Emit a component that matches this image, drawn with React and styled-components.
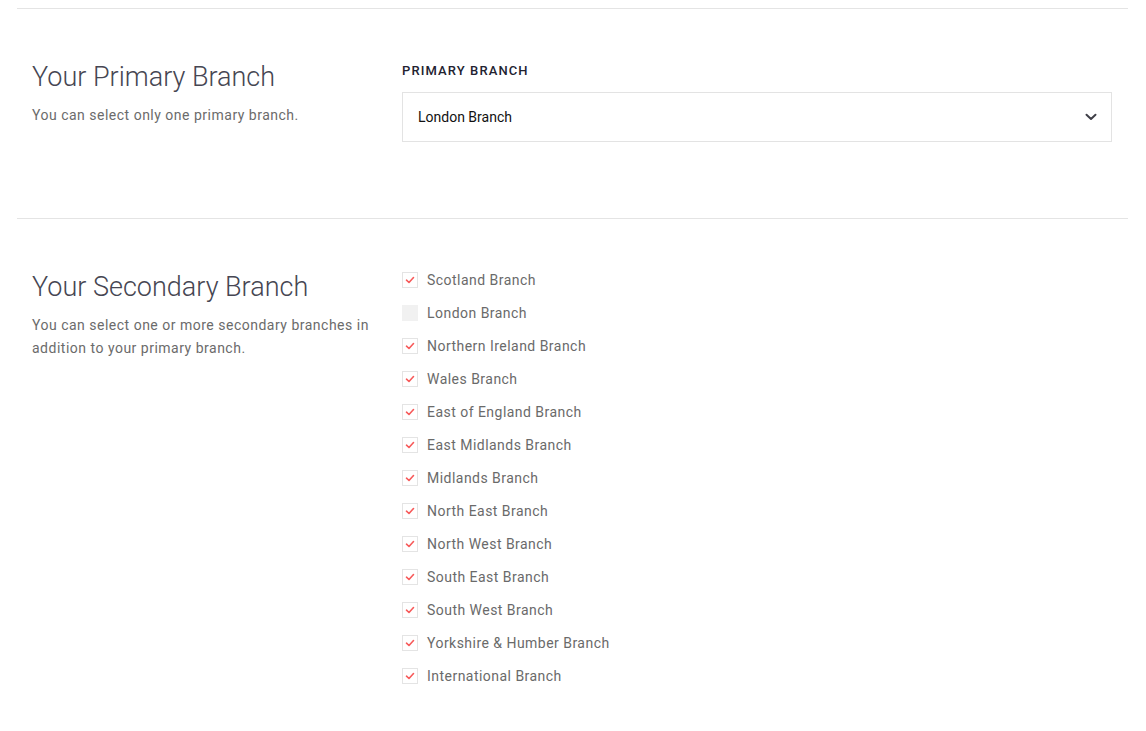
import React from 'react';
import styled, { createGlobalStyle } from 'styled-components';

const GlobalStyle = createGlobalStyle`
  body {
    margin: 0;
    background: #fff;
    font-family: Roboto, 'Noto Sans', sans-serif;
  }
`;

const Page = styled.div`
  padding: 8px 18px 0 17px;
`;

const Section = styled.section`
  display: grid;
  grid-template-columns: 370px 1fr;
  border-top: 1px solid #e4e4e4;
  padding: ${({ $pad }) => $pad};
  padding-left: 15px;
  padding-right: 16px;
`;

const Intro = styled.div`
  padding-right: 24px;
  margin-top: ${({ $shift }) => $shift}px;
`;

const Title = styled.h2`
  margin: 0 0 11px;
  font-size: 27px;
  font-weight: 300;
  line-height: 32px;
  color: #464652;
`;

const Hint = styled.p`
  margin: 0;
  font-size: 14px;
  line-height: 23px;
  letter-spacing: 0.5px;
  color: #6b6b6b;
`;

const Label = styled.div`
  font-size: 13px;
  font-weight: 500;
  letter-spacing: 1.1px;
  line-height: 16px;
  color: #222230;
  margin-bottom: 13px;
`;

const Select = styled.div`
  display: flex;
  align-items: center;
  justify-content: space-between;
  height: 48px;
  border: 1px solid #e3e3e3;
  padding: 0 14px 0 15px;
  font-size: 14px;
  color: #111;
`;

const List = styled.ul`
  list-style: none;
  margin: 0;
  padding: 0;
  display: flex;
  flex-direction: column;
  gap: 17px;
`;

const Item = styled.li`
  display: flex;
  align-items: center;
  gap: 9px;
  height: 16px;
  font-size: 14px;
  letter-spacing: 0.47px;
  color: #6a6a6a;
`;

const Box = styled.span`
  width: 16px;
  height: 16px;
  box-sizing: border-box;
  display: flex;
  align-items: center;
  justify-content: center;
  border: 1px solid ${({ $on }) => ($on ? '#e4e4e4' : '#f1f1f1')};
  background: ${({ $on }) => ($on ? '#fff' : '#f1f1f1')};
`;

const branches = [
  ['Scotland Branch', true],
  ['London Branch', false],
  ['Northern Ireland Branch', true],
  ['Wales Branch', true],
  ['East of England Branch', true],
  ['East Midlands Branch', true],
  ['Midlands Branch', true],
  ['North East Branch', true],
  ['North West Branch', true],
  ['South East Branch', true],
  ['South West Branch', true],
  ['Yorkshire & Humber Branch', true],
  ['International Branch', true],
];

const Check = () => (
  <svg width="10" height="8" viewBox="0 0 10 8">
    <path d="M1.5 4.2 L4 6.5 L8.5 1.5" fill="none" stroke="#f75a5a" strokeWidth="1.6" strokeLinecap="round" strokeLinejoin="round" />
  </svg>
);

const Chevron = () => (
  <svg width="12" height="8" viewBox="0 0 12 8">
    <path d="M1.5 1.8 L6 6 L10.5 1.8" fill="none" stroke="#3f3f48" strokeWidth="2" strokeLinecap="round" strokeLinejoin="round" />
  </svg>
);

const App = () => (
  <Page>
    <GlobalStyle />
    <Section $pad="54px 0 76px">
      <Intro $shift={-2}>
        <Title>Your Primary Branch</Title>
        <Hint>You can select only one primary branch.</Hint>
      </Intro>
      <div>
        <Label>PRIMARY BRANCH</Label>
        <Select>
          <span>London Branch</span>
          <Chevron />
        </Select>
      </div>
    </Section>
    <Section $pad="53px 0 40px">
      <Intro $shift={-1}>
        <Title>Your Secondary Branch</Title>
        <Hint>You can select one or more secondary branches in addition to your primary branch.</Hint>
      </Intro>
      <List>
        {branches.map(([name, on]) => (
          <Item key={name}>
            <Box $on={on}>{on && <Check />}</Box>
            {name}
          </Item>
        ))}
      </List>
    </Section>
  </Page>
);

export default App;
